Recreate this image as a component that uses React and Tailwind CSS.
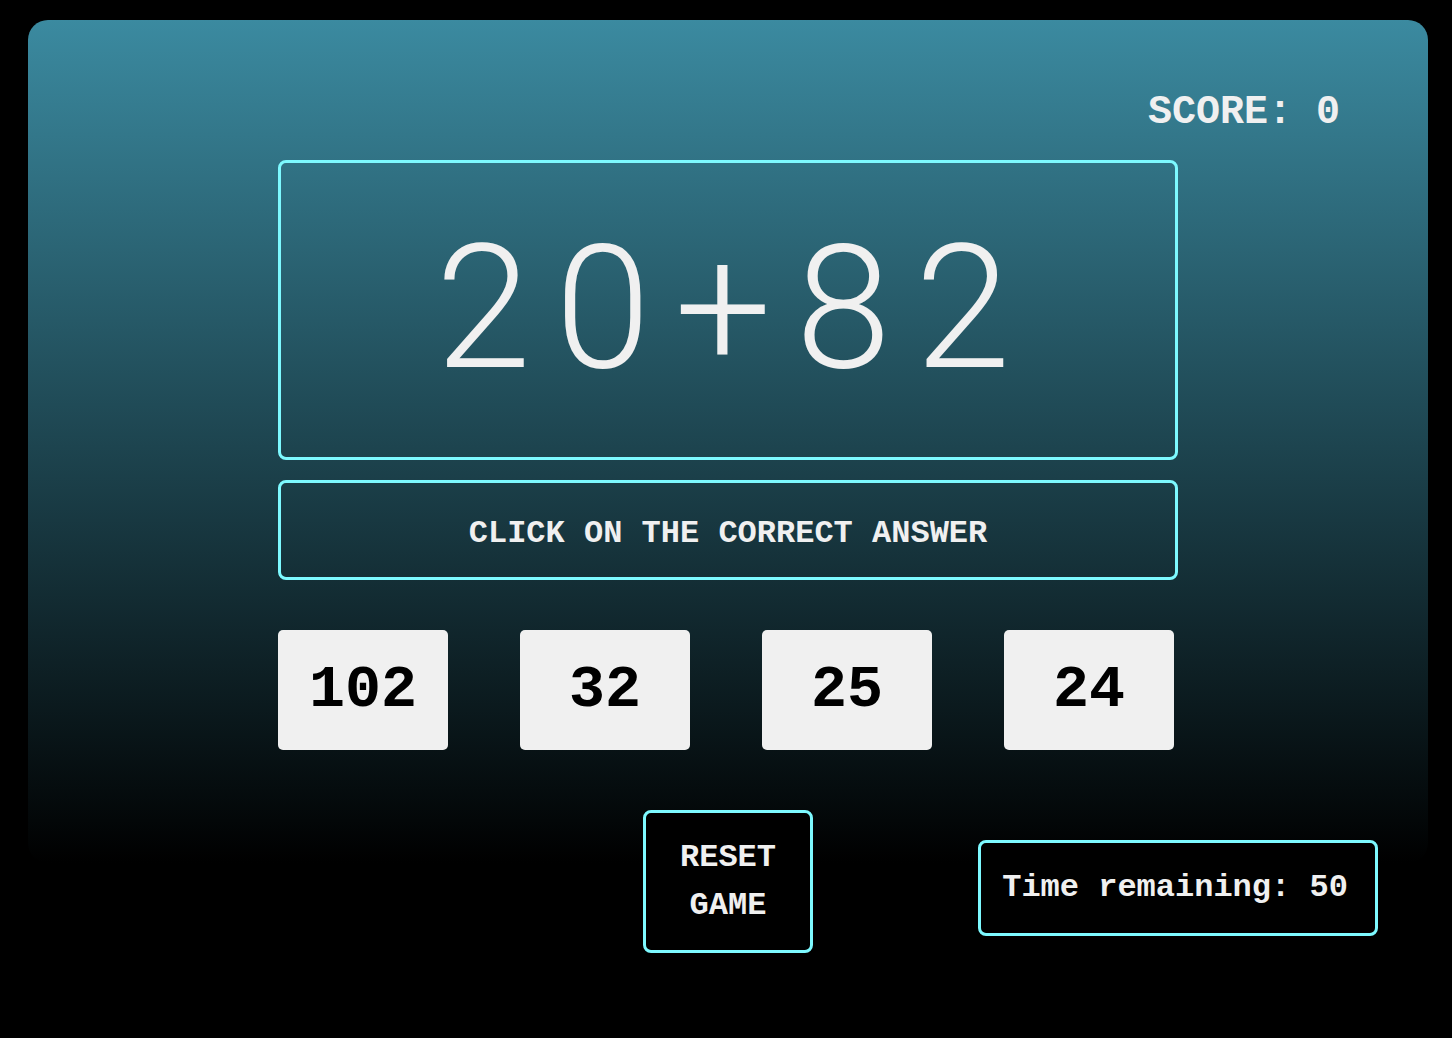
export default function App() {
  const mono = "font-['Courier_New','Liberation_Mono',monospace]";
  const answers = [102, 32, 25, 24];
  return (
    <div className="w-[1452px] h-[1038px] bg-black overflow-hidden pt-[20px] pl-[28px]">
      <div className="w-[1400px] h-[843px] rounded-[20px] bg-[linear-gradient(to_bottom,#3b8aa0,#000000)] flex flex-col shadow-[0_4px_10px_rgba(0,0,0,0.4)]">
        <div className={`shrink-0 flex justify-end pt-[73px] pr-[88px] ${mono}`}>
          <span className="text-[40px] leading-[40px] font-bold text-[#f0f0f0] whitespace-pre">SCORE: 0</span>
        </div>

        <div className="shrink-0 mt-[27px] mx-auto w-[900px] h-[300px] border-[3px] border-[#7df9ff] rounded-[8px] flex items-center justify-center pb-[5px]">
          <span className="font-['Roboto',sans-serif] font-light text-[172px] leading-none tracking-[24px] pl-[14px] text-[#f0f0f0]">
            20+82
          </span>
        </div>

        <div className="shrink-0 mt-[20px] mx-auto w-[900px] h-[100px] border-[3px] border-[#7df9ff] rounded-[8px] flex items-center justify-center pt-[7px]">
          <span className={`${mono} font-bold text-[32px] leading-none text-[#f0f0f0]`}>
            CLICK ON THE CORRECT ANSWER
          </span>
        </div>

        <div className="shrink-0 mt-[50px] mx-auto w-[900px] flex gap-[72px]">
          {answers.map((a) => (
            <div
              key={a}
              className={`w-[170px] h-[120px] bg-[#f0f0f0] rounded-[5px] flex items-center justify-center ${mono} font-bold text-[60px] leading-none text-black`}
            >
              {a}
            </div>
          ))}
        </div>

        <div className="shrink-0 mt-[60px] grid grid-cols-[1fr_170px_1fr] w-full">
          <div />
          <div className="w-[170px] h-[143px] border-[3px] border-[#7df9ff] rounded-[8px] bg-black flex items-center justify-center">
            <span className={`${mono} font-bold text-[32px] leading-[48px] text-[#f0f0f0] text-center`}>
              RESET GAME
            </span>
          </div>
          <div className="flex justify-end pr-[50px] pt-[30px]">
            <div className="w-[400px] h-[96px] border-[3px] border-[#7df9ff] rounded-[8px] bg-black flex items-center justify-center pr-[6px]">
              <span className={`${mono} font-bold text-[32px] leading-none text-[#f0f0f0] whitespace-pre`}>
                Time remaining: 50
              </span>
            </div>
          </div>
        </div>
      </div>
    </div>
  );
}
